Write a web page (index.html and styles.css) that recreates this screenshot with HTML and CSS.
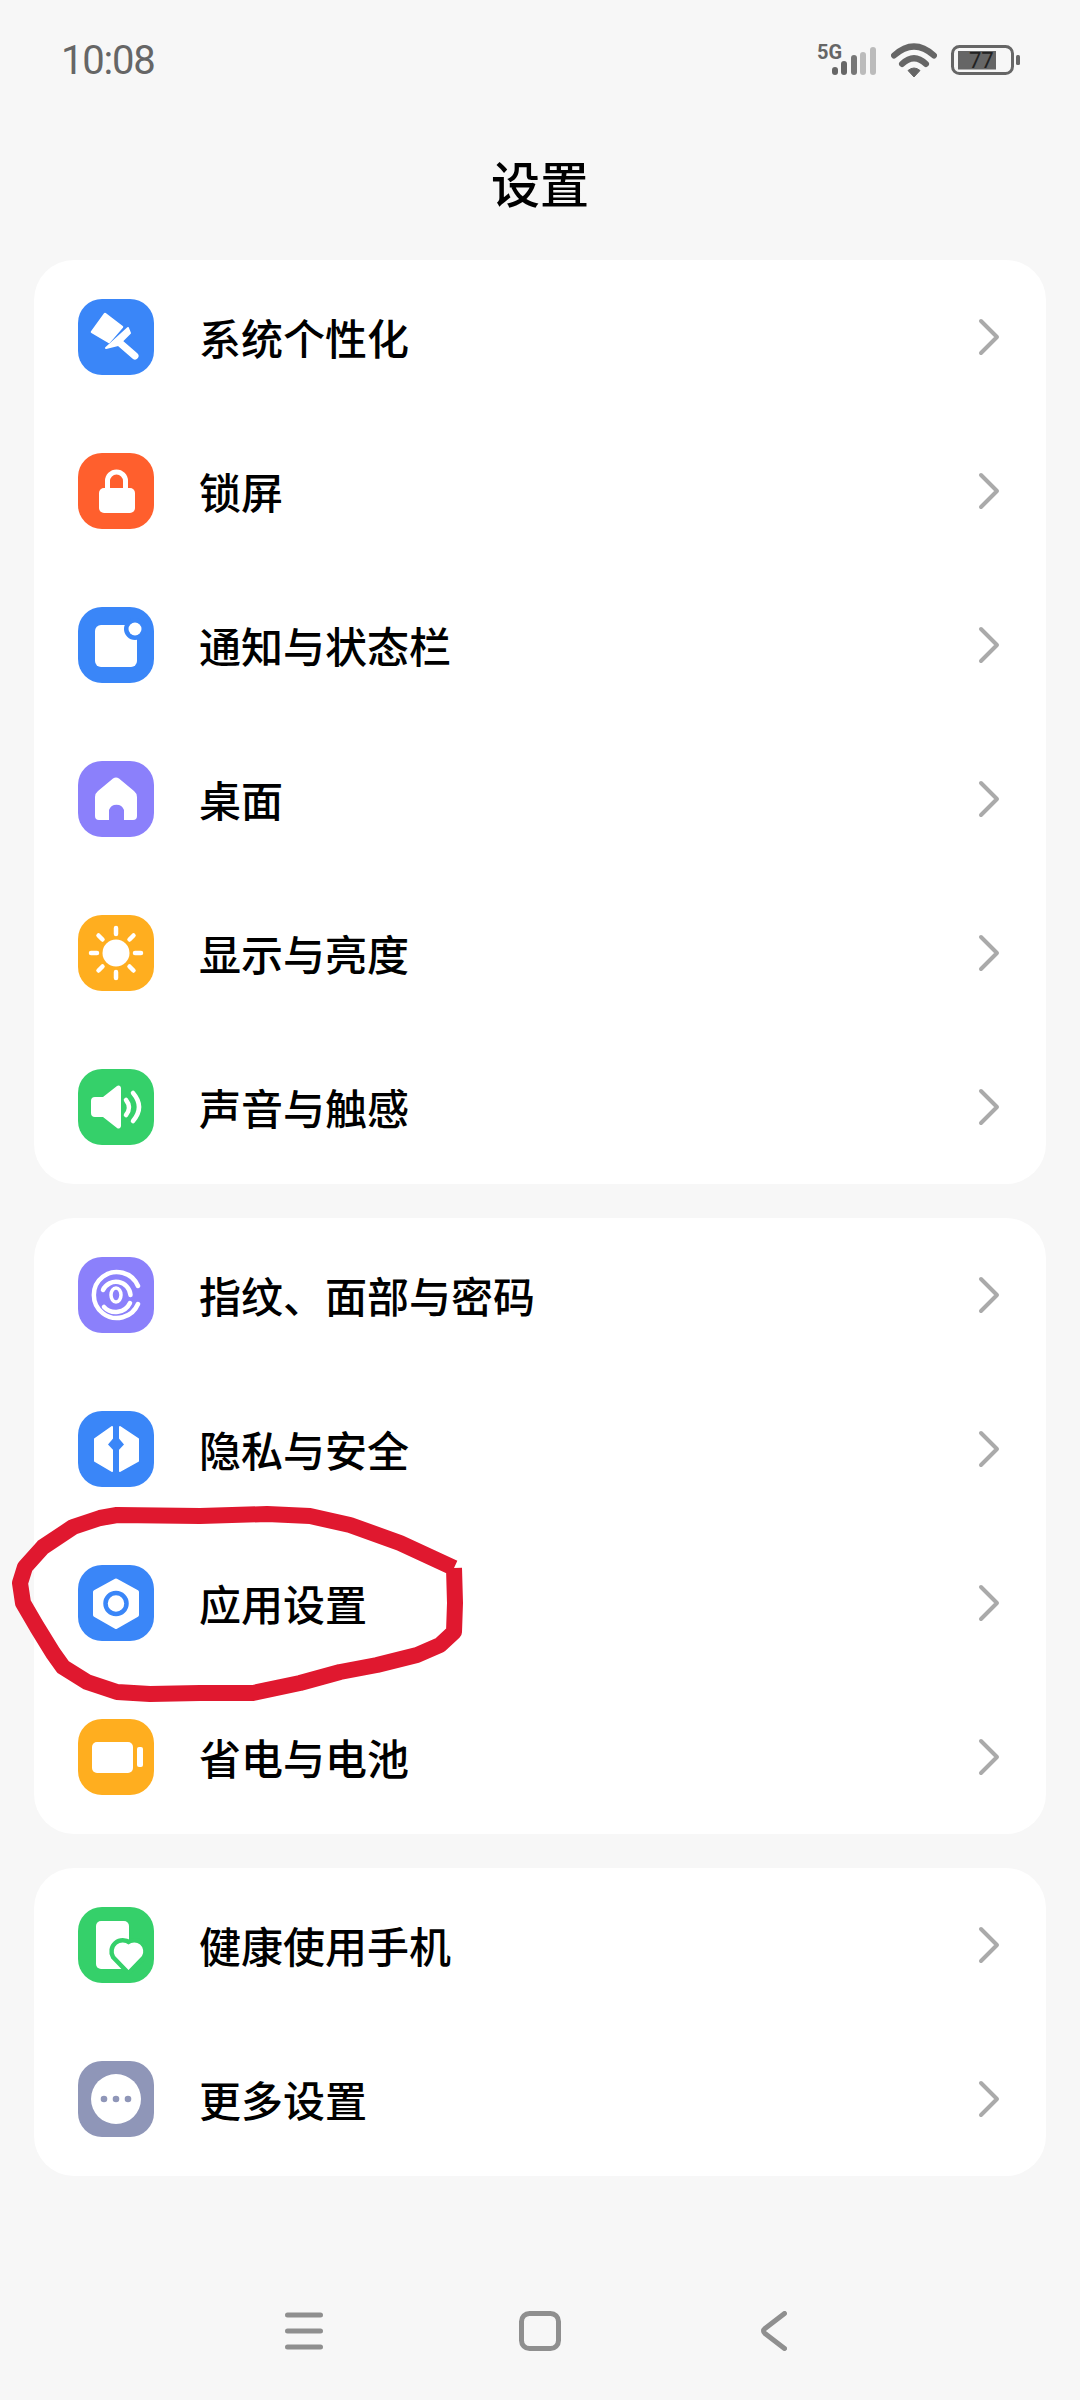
FILE: index.html
```html
<!DOCTYPE html>
<html lang="zh-CN">

<head>
    <meta charset="UTF-8">
    <meta name="viewport" content="width=device-width, initial-scale=1.0">
    <title>设置</title>
    <link rel="stylesheet" href="styles.css">
</head>

<body>
    <div class="page">
        <!-- Status bar -->
        <div class="status-bar">
            <span class="clock">10:08</span>
            <div class="status-icons">
                <svg class="signal" viewBox="0 0 60 40" width="60" height="40">
                    <text class="signal-label" x="0" y="19">5G</text>
                    <rect x="15" y="27" width="6" height="8" rx="3" fill="#666"/>
                    <rect x="24" y="21" width="6" height="14" rx="3" fill="#666"/>
                    <rect x="34" y="15" width="6" height="20" rx="3" fill="#777"/>
                    <rect x="43" y="12" width="6" height="23" rx="3" fill="#bbb"/>
                    <rect x="53" y="7" width="6" height="28" rx="3" fill="#bbb"/>
                </svg>
                <svg class="wifi" viewBox="0 0 46 36" width="46" height="36">
                    <path d="M3 13.500Q23 -4.500 43 13.500" fill="none" stroke="#666" stroke-width="6" stroke-linecap="round"/>
                    <path d="M11 22Q23 10.500 35 22" fill="none" stroke="#666" stroke-width="6" stroke-linecap="round"/>
                    <path d="M17 28.500Q23 23.500 29 28.500L23 35Z" fill="#666" stroke="#666" stroke-width="1" stroke-linejoin="round"/>
                </svg>
                <svg class="battery" viewBox="0 0 69 30" width="69" height="30">
                    <rect x="1.500" y="1.500" width="60" height="27" rx="7" fill="none" stroke="#666" stroke-width="3"/>
                    <rect x="7" y="6" width="38" height="18.500" fill="#666"/>
                    <rect x="65" y="10" width="4" height="10" rx="1.500" fill="#666"/>
                    <text class="battery-label" x="18" y="23">77</text>
                </svg>
            </div>
        </div>

        <h1 class="title">设置</h1>

        <!-- Group 1 -->
        <div class="card">
            <div class="row">
                <svg class="icon blue" viewBox="0 0 76 76">
                    <path d="M14 33L27 15L44 28L31 43Z" fill="#fff" stroke="#fff" stroke-width="2.500" stroke-linejoin="round"/>
                    <path d="M28 49L50 29L52 34L40 46Z" fill="#fff" stroke="#fff" stroke-width="2" stroke-linejoin="round"/>
                    <path d="M42 44L57 57" stroke="#fff" stroke-width="7" stroke-linecap="round"/>
                </svg>
                <span class="label">系统个性化</span>
                <svg class="chevron" viewBox="0 0 22 38"><path d="M3 3L19 19L3 35"/></svg>
            </div>
            <div class="row">
                <svg class="icon orange" viewBox="0 0 76 76">
                    <rect x="21" y="35" width="36" height="25" rx="5" fill="#fff"/>
                    <path d="M29.500 37V28a9 9 0 0 1 18 0V37" fill="none" stroke="#fff" stroke-width="5"/>
                </svg>
                <span class="label">锁屏</span>
                <svg class="chevron" viewBox="0 0 22 38"><path d="M3 3L19 19L3 35"/></svg>
            </div>
            <div class="row">
                <svg class="icon blue" viewBox="0 0 76 76">
                    <rect x="17" y="18" width="42" height="42" rx="6" fill="#fff"/>
                    <circle cx="57" cy="22" r="11" fill="#3a86f8"/>
                    <circle cx="57" cy="22" r="6.500" fill="#fff"/>
                </svg>
                <span class="label">通知与状态栏</span>
                <svg class="chevron" viewBox="0 0 22 38"><path d="M3 3L19 19L3 35"/></svg>
            </div>
            <div class="row">
                <svg class="icon purple" viewBox="0 0 76 76">
                    <path d="M35 17.500a5 5 0 0 1 6 0L56 30a8 8 0 0 1 3 6V55a4 4 0 0 1 -4 4H46V49a8 8 0 0 0 -15 0V59H21a4 4 0 0 1 -4 -4V36a8 8 0 0 1 3 -6Z" fill="#fff"/>
                </svg>
                <span class="label">桌面</span>
                <svg class="chevron" viewBox="0 0 22 38"><path d="M3 3L19 19L3 35"/></svg>
            </div>
            <div class="row">
                <svg class="icon yellow" viewBox="0 0 76 76">
                    <circle cx="38" cy="38" r="13.500" fill="#fff"/>
                    <path d="M38 13V19M38 57V63M13 38H19M57 38H63M20.500 20.500L24.500 24.500M55.500 20.500L51.500 24.500M20.500 55.500L24.500 51.500M55.500 55.500L51.500 51.500" stroke="#fff" stroke-width="4.500" stroke-linecap="round"/>
                </svg>
                <span class="label">显示与亮度</span>
                <svg class="chevron" viewBox="0 0 22 38"><path d="M3 3L19 19L3 35"/></svg>
            </div>
            <div class="row">
                <svg class="icon green" viewBox="0 0 76 76">
                    <path d="M17 28H25L39 17a2.500 2.500 0 0 1 4 2V57a2.500 2.500 0 0 1 -4 2L25 48H17a4 4 0 0 1 -4 -4V32a4 4 0 0 1 4 -4Z" fill="#fff"/>
                    <path d="M48 31Q54 38.500 48 46" fill="none" stroke="#fff" stroke-width="4.500" stroke-linecap="round"/>
                    <path d="M55 24Q67 38 55 52" fill="none" stroke="#fff" stroke-width="4.500" stroke-linecap="round"/>
                </svg>
                <span class="label">声音与触感</span>
                <svg class="chevron" viewBox="0 0 22 38"><path d="M3 3L19 19L3 35"/></svg>
            </div>
        </div>

        <!-- Group 2 -->
        <div class="card">
            <div class="row">
                <svg class="icon purple" viewBox="0 0 76 76">
                    <g fill="none" stroke="#fff" stroke-width="4.500" stroke-linecap="round">
                        <path d="M60 29A23 23 0 1 0 60 47"/>
                        <path d="M25 33A14.500 14.500 0 0 1 52.500 38"/>
                        <path d="M26 50A16 16 0 0 0 52 46"/>
                        <ellipse cx="38" cy="38" rx="5" ry="7" stroke-width="3.500"/>
                    </g>
                </svg>
                <span class="label">指纹、面部与密码</span>
                <svg class="chevron" viewBox="0 0 22 38"><path d="M3 3L19 19L3 35"/></svg>
            </div>
            <div class="row">
                <svg class="icon blue" viewBox="0 0 76 76">
                    <path d="M34 16L17 28V50L34 60Z" fill="#fff" stroke="#fff" stroke-width="2" stroke-linejoin="round"/>
                    <path d="M42 16L60 28V50L42 60Z" fill="#fff" stroke="#fff" stroke-width="2" stroke-linejoin="round"/>
                    <path d="M38 24L46 33.500L38 42L30 33.500Z" fill="#3a86f8"/>
                </svg>
                <span class="label">隐私与安全</span>
                <svg class="chevron" viewBox="0 0 22 38"><path d="M3 3L19 19L3 35"/></svg>
            </div>
            <div class="row">
                <svg class="icon blue" viewBox="0 0 76 76">
                    <path d="M38 15.500L59 27V50L38 62L17 50V27Z" fill="#fff" stroke="#fff" stroke-width="4" stroke-linejoin="round"/>
                    <circle cx="38" cy="38.500" r="10.500" fill="none" stroke="#3a86f8" stroke-width="4.500"/>
                </svg>
                <span class="label">应用设置</span>
                <svg class="chevron" viewBox="0 0 22 38"><path d="M3 3L19 19L3 35"/></svg>
            </div>
            <div class="row">
                <svg class="icon yellow" viewBox="0 0 76 76">
                    <rect x="14" y="23" width="41" height="31" rx="5" fill="#fff"/>
                    <rect x="59" y="28" width="6" height="20" rx="2" fill="#fff"/>
                </svg>
                <span class="label">省电与电池</span>
                <svg class="chevron" viewBox="0 0 22 38"><path d="M3 3L19 19L3 35"/></svg>
            </div>
        </div>

        <!-- Group 3 -->
        <div class="card">
            <div class="row">
                <svg class="icon green" viewBox="0 0 76 76">
                    <rect x="18" y="14" width="33" height="48" rx="5" fill="#fff"/>
                    <path class="heart" d="M50.500 63L37 49a9 9 0 0 1 13.500 -11.500a9 9 0 0 1 13.500 11.500Z"/>
                </svg>
                <span class="label">健康使用手机</span>
                <svg class="chevron" viewBox="0 0 22 38"><path d="M3 3L19 19L3 35"/></svg>
            </div>
            <div class="row">
                <svg class="icon slate" viewBox="0 0 76 76">
                    <circle cx="38" cy="38" r="25" fill="#fff"/>
                    <circle cx="26" cy="38" r="3.300" fill="#8f96b8"/>
                    <circle cx="38" cy="38" r="3.300" fill="#8f96b8"/>
                    <circle cx="50" cy="38" r="3.300" fill="#8f96b8"/>
                </svg>
                <span class="label">更多设置</span>
                <svg class="chevron" viewBox="0 0 22 38"><path d="M3 3L19 19L3 35"/></svg>
            </div>
        </div>

        <!-- Navigation bar -->
        <div class="nav-bar">
            <svg class="nav-menu" viewBox="0 0 38 38" width="38" height="38">
                <path d="M2.500 3H35.500M2.500 19H35.500M2.500 35H35.500"/>
            </svg>
            <svg class="nav-home" viewBox="0 0 42 40" width="42" height="40">
                <rect x="2.500" y="2.500" width="37" height="35" rx="8"/>
            </svg>
            <svg class="nav-back" viewBox="0 0 26 40" width="26" height="40">
                <path d="M23.500 2.500L4 17.500Q1 20 4 22.500L23.500 37.500"/>
            </svg>
        </div>

        <!-- Red marker ring drawn over the list -->
        <svg class="scribble" viewBox="0 1500 480 210" width="480" height="210">
            <polyline points="454,1568 400,1543 350,1525 310,1516 267,1514 200,1516 117,1515 100,1518 73,1527 43,1547 25,1567 20,1583 23,1603 37,1627 53,1653 63,1667 87,1682 117,1692 150,1694 200,1693 253,1693 300,1683 340,1672 377,1665 417,1655 440,1645 454,1632 455,1603 454,1568"/>
        </svg>
    </div>
</body>

</html>
```

FILE: styles.css
```css
body {
    margin: 0;
    background-color: #f7f7f7;
    font-family: "Noto Sans CJK SC", "Noto Sans", sans-serif;
    color: #000;
}

.page {
    position: relative;
    width: 1080px;
    height: 2400px;
    padding: 0 34px;
    box-sizing: border-box;
    overflow: hidden;
}

/* Status bar */
.status-bar {
    display: flex;
    justify-content: space-between;
    align-items: center;
    height: 120px;
    padding: 0 26px 0 27px;
}

.clock {
    font-family: Roboto, sans-serif;
    font-size: 40px;
    letter-spacing: -1.2px;
    color: #666;
}

.status-icons {
    display: flex;
    align-items: center;
    gap: 14px;
}

.signal-label {
    font-family: Roboto, sans-serif;
    font-size: 20px;
    font-weight: 700;
    fill: #666;
}

.battery-label {
    font-family: Roboto, sans-serif;
    font-size: 22px;
    fill: #222;
}

.title {
    height: 140px;
    margin: 0;
    font-size: 49px;
    font-weight: 500;
    line-height: 124px;
    text-align: center;
}

/* Groups */
.card {
    margin-bottom: 34px;
    background-color: #fff;
    border-radius: 40px;
}

.row {
    display: flex;
    align-items: center;
    height: 154px;
    padding: 0 46px 0 44px;
}

.label {
    flex: 1;
    margin-left: 45px;
    padding-bottom: 2px;
    font-size: 42px;
    font-weight: 500;
}

.chevron {
    width: 22px;
    height: 38px;
    fill: none;
    stroke: #aaa;
    stroke-width: 4;
    stroke-linecap: round;
    stroke-linejoin: round;
}

.icon {
    flex: none;
    width: 76px;
    height: 76px;
    border-radius: 24px;
}

.blue { background-color: #3a86f8; }
.orange { background-color: #ff5f2d; }
.purple { background-color: #8b80fb; }
.yellow { background-color: #ffae1f; }
.green { background-color: #35d06a; }
.slate { background-color: #8f96b8; }

.heart {
    fill: #fff;
    stroke: #35d06a;
    stroke-width: 9;
    stroke-linejoin: round;
    paint-order: stroke;
}

/* Navigation bar */
.nav-bar {
    display: flex;
    align-items: center;
    margin-top: 135px;
    padding-left: 251px;
}

.nav-bar svg {
    fill: none;
    stroke: #8f8f8f;
    stroke-linecap: round;
    stroke-linejoin: round;
    stroke-width: 5;
}

.nav-home {
    margin-left: 196px;
}

.nav-back {
    margin-left: 200px;
}

.scribble {
    position: absolute;
    left: 0;
    top: 1500px;
    fill: none;
    stroke: #e0182f;
    stroke-width: 16;
    stroke-linejoin: round;
}
```
